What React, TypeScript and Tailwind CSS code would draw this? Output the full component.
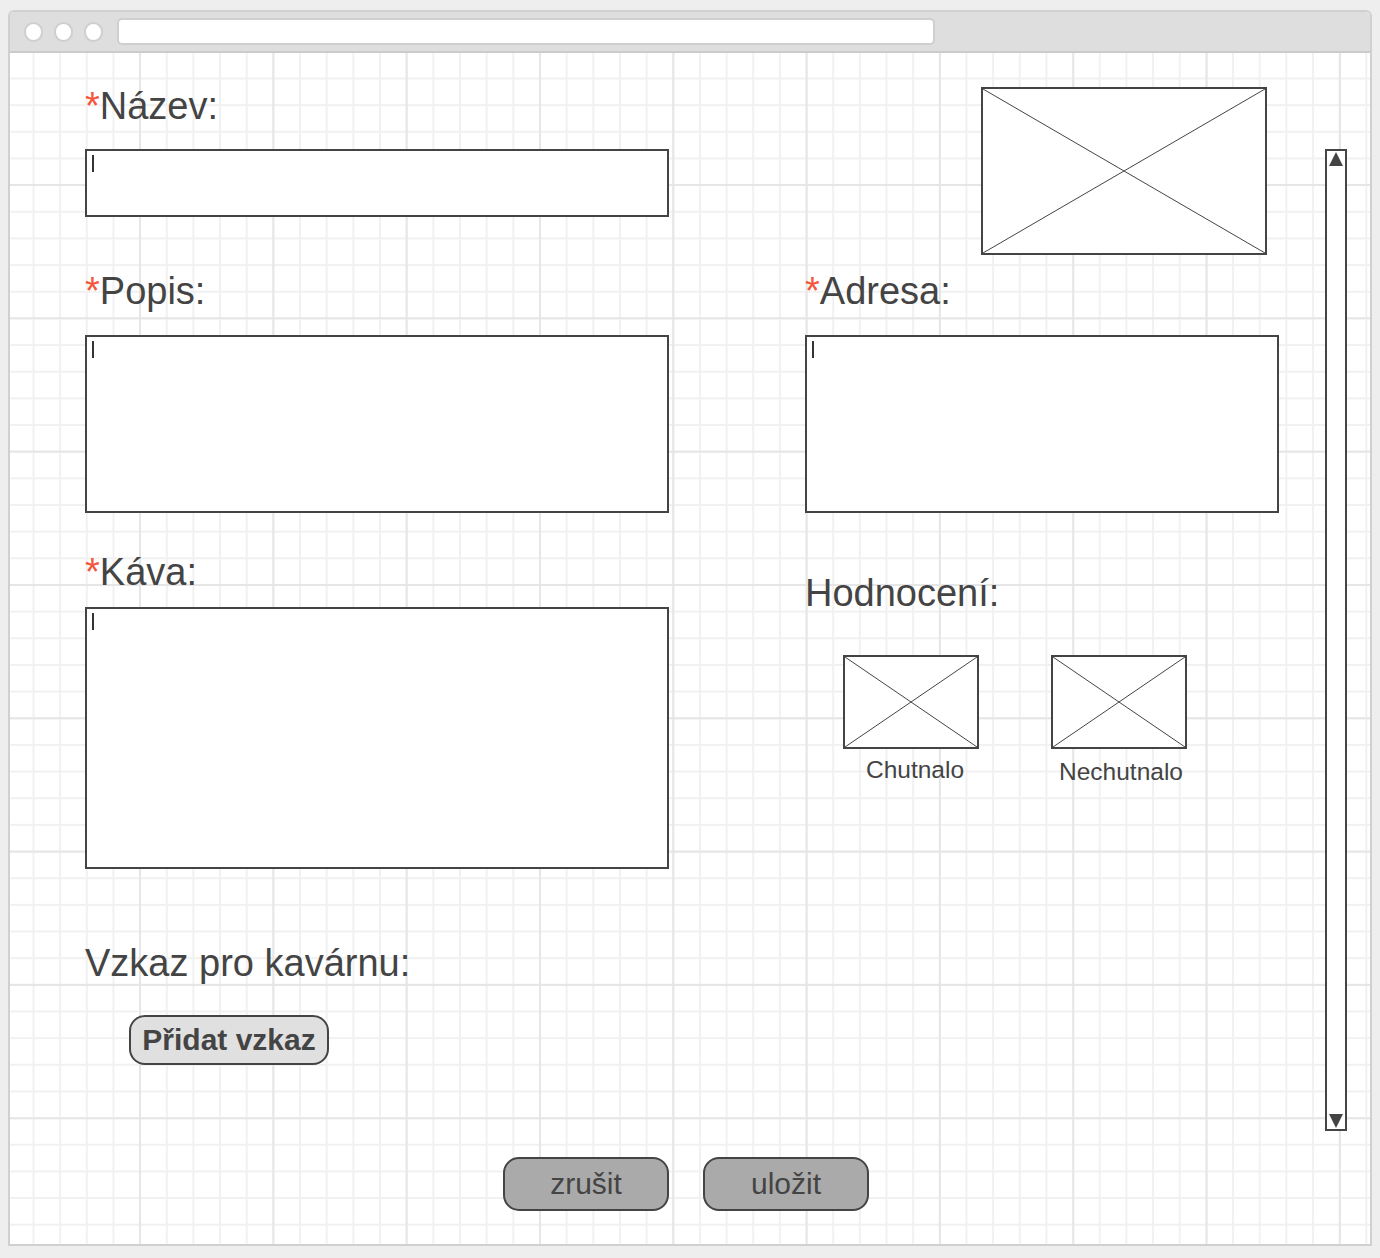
import React from "react";

const font = "font-['Liberation_Sans',Arial,sans-serif]";

function Cursor() {
  return <div className="absolute left-[5px] top-[4px] h-[17px] w-[2px] bg-[#333]" />;
}

function Field({ h, w }: { h: string; w: string }) {
  return (
    <div className={`relative border-2 border-[#444] bg-white ${h} ${w}`}>
      <Cursor />
    </div>
  );
}

function Label({ text, required, className = "" }: { text: string; required?: boolean; className?: string }) {
  return (
    <div className={`text-[38px] leading-none text-[#444] whitespace-nowrap ${className}`}>
      {required && <span className="text-[#f4573d]">*</span>}
      {text}
    </div>
  );
}

function Placeholder({ className = "" }: { className?: string }) {
  return (
    <div className={`border-2 border-[#444] bg-white ${className}`}>
      <svg className="block h-full w-full" viewBox="0 0 100 100" preserveAspectRatio="none">
        <line x1="0" y1="0" x2="100" y2="100" stroke="#444" strokeWidth="1" vectorEffect="non-scaling-stroke" />
        <line x1="100" y1="0" x2="0" y2="100" stroke="#444" strokeWidth="1" vectorEffect="non-scaling-stroke" />
      </svg>
    </div>
  );
}

export default function App() {
  return (
    <div className={`w-[1380px] h-[1258px] bg-[#eeeeee] pt-[10px] pl-[8px] ${font}`}>
      <div className="flex h-[1236px] w-[1364px] flex-col rounded-t-[6px] border-2 border-[#d0d0d0] bg-white">
        {/* title bar */}
        <div className="flex h-[41px] items-start border-b-2 border-[#cbcbcb] bg-[#dedede] rounded-t-[4px]">
          <div className="ml-[14px] mt-[10px] h-[20px] w-[19px] rounded-full border-2 border-[#cfcfcf] bg-white" />
          <div className="ml-[11px] mt-[10px] h-[20px] w-[19px] rounded-full border-2 border-[#cfcfcf] bg-white" />
          <div className="ml-[11px] mt-[10px] h-[20px] w-[19px] rounded-full border-2 border-[#cfcfcf] bg-white" />
          <div className="ml-[14px] mt-[6px] h-[27px] w-[818px] rounded-[5px] border-2 border-[#cfcfcf] bg-white" />
        </div>
        {/* content */}
        <div className="flex flex-1 flex-col bg-white bg-[linear-gradient(to_right,#e6e6e6_2px,transparent_2px),linear-gradient(to_bottom,#e6e6e6_2px,transparent_2px),linear-gradient(to_right,#f1f1f1_2px,transparent_2px),linear-gradient(to_bottom,#f1f1f1_2px,transparent_2px)] bg-[size:133.333px_133.333px,133.333px_133.333px,26.667px_26.667px,26.667px_26.667px] bg-[position:129px_0px,0px_131px,22.5px_0px,0px_24.5px]">
          <div className="flex items-start">
            {/* left column */}
            <div className="ml-[75px] flex w-[584px] flex-col pt-[34px]">
              <Label text="Název:" required />
              <div className="mt-[24px]">
                <Field h="h-[68px]" w="w-[584px]" />
              </div>
              <Label text="Popis:" required className="mt-[55px]" />
              <div className="mt-[25px]">
                <Field h="h-[178px]" w="w-[584px]" />
              </div>
              <Label text="Káva:" required className="mt-[40px]" />
              <div className="mt-[16px]">
                <Field h="h-[262px]" w="w-[584px]" />
              </div>
              <Label text="Vzkaz pro kavárnu:" className="mt-[75px]" />
              <div className="mt-[33px] ml-[44px] flex h-[50px] w-[200px] items-center justify-center rounded-[16px] border-2 border-[#444] bg-[#e0e0e0] text-[30px] font-bold leading-none text-[#444]">
                Přidat vzkaz
              </div>
            </div>
            {/* right column */}
            <div className="ml-[136px] flex w-[474px] flex-col pt-[34px]">
              <Placeholder className="ml-[176px] h-[168px] w-[286px]" />
              <Label text="Adresa:" required className="mt-[17px]" />
              <div className="mt-[25px]">
                <Field h="h-[178px]" w="w-[474px]" />
              </div>
              <Label text="Hodnocení:" className="mt-[61px]" />
              <div className="mt-[43px] ml-[38px] flex gap-[72px]">
                <div className="flex w-[136px] flex-col items-center">
                  <Placeholder className="h-[94px] w-[136px]" />
                  <div className="mt-[9px] pl-[8px] text-[24.5px] leading-none text-[#444]">Chutnalo</div>
                </div>
                <div className="flex w-[136px] flex-col items-center">
                  <Placeholder className="h-[94px] w-[136px]" />
                  <div className="mt-[11px] pl-[4px] text-[24.5px] leading-none text-[#444]">Nechutnalo</div>
                </div>
              </div>
            </div>
            {/* scrollbar */}
            <div className="ml-[46px] mt-[96px] flex h-[982px] w-[22px] flex-col items-center justify-between border-2 border-[#444] bg-white py-[1px]">
              <svg width="14" height="14" viewBox="0 0 14 14">
                <polygon points="7,0 14,14 0,14" fill="#444" />
              </svg>
              <svg width="14" height="14" viewBox="0 0 14 14">
                <polygon points="0,0 14,0 7,14" fill="#444" />
              </svg>
            </div>
          </div>
          {/* bottom buttons */}
          <div className="ml-[493px] mt-[26px] flex gap-[34px]">
            <div className="flex h-[54px] w-[166px] items-center justify-center rounded-[16px] border-2 border-[#444] bg-[#aaaaaa] text-[30px] leading-none text-[#444]">
              zrušit
            </div>
            <div className="flex h-[54px] w-[166px] items-center justify-center rounded-[16px] border-2 border-[#444] bg-[#aaaaaa] text-[30px] leading-none text-[#444]">
              uložit
            </div>
          </div>
        </div>
      </div>
    </div>
  );
}
